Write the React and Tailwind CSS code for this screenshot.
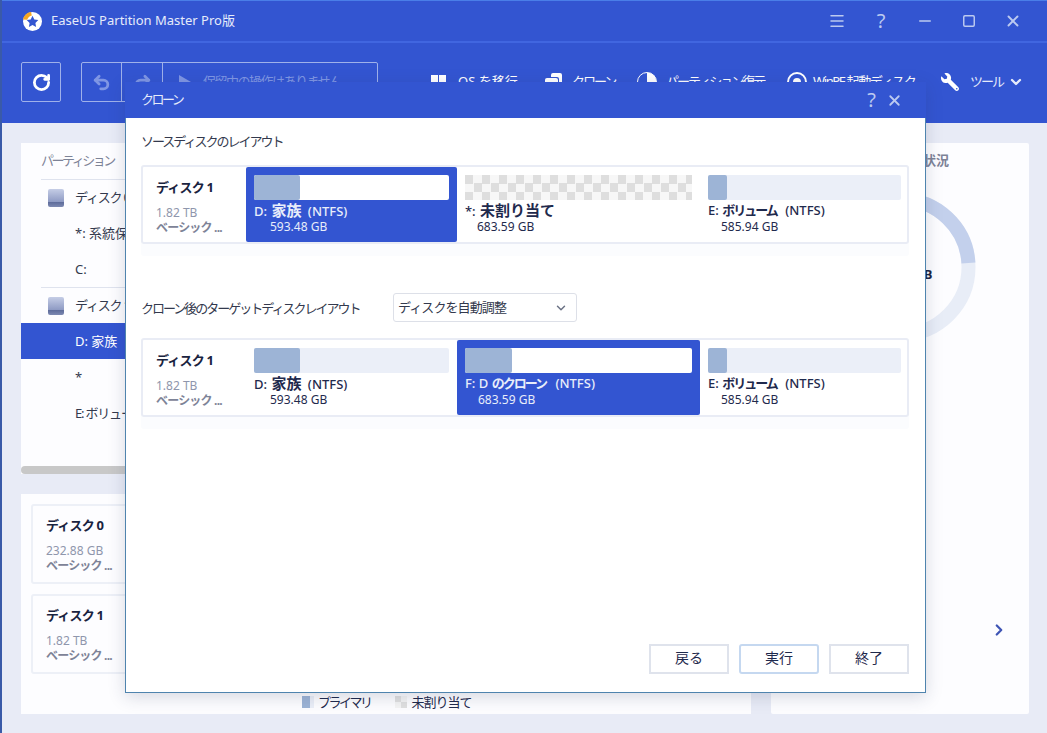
import React from "react";
import { ChevronDown, ChevronRight, Undo2, Redo2, RotateCw, Menu, X, Minus, Square } from "lucide-react";
import { FaWrench } from "react-icons/fa";

const font = "font-['Noto_Sans','Noto_Sans_CJK_JP',sans-serif]";

function Logo() {
  return (
    <svg width="20" height="20" viewBox="0 0 20 20" className="shrink-0">
      <circle cx="10.5" cy="10.5" r="9.5" fill="#fff" />
      <path d="M10.5 4.8l1.8 3.7 4 .6-2.9 2.8.7 4-3.6-1.9-3.6 1.9.7-4-2.9-2.8 4-.6z" fill="#3355d1" />
      <path d="M1 8.5C1.8 4.5 5 1.6 9 1l.8 3.5C7.5 5 6 6.5 5.2 8.8z" fill="#f5a623" />
    </svg>
  );
}

function DiskIcon() {
  return (
    <svg width="16" height="18" viewBox="0 0 16 18">
      <defs>
        <linearGradient id="dg" x1="0" y1="0" x2="0" y2="1">
          <stop offset="0" stopColor="#c5cde6" />
          <stop offset="0.7" stopColor="#8f9bc4" />
          <stop offset="0.72" stopColor="#5c6a99" />
          <stop offset="1" stopColor="#7d89b2" />
        </linearGradient>
      </defs>
      <path d="M2 0h12a2 2 0 0 1 2 2v14a2 2 0 0 1-2 2H2a2 2 0 0 1-2-2V2a2 2 0 0 1 2-2z" fill="url(#dg)" />
    </svg>
  );
}

function CloneIcon() {
  return (
    <svg width="17" height="18" viewBox="0 0 17 18" fill="#fff">
      <path d="M6 2a2 2 0 0 1 2-2h7a2 2 0 0 1 2 2v10a2 2 0 0 1-2 2h-1V6a2 2 0 0 0-2-2H6z" />
      <path d="M0 7a2 2 0 0 1 2-2h9a2 2 0 0 1 2 2v9a2 2 0 0 1-2 2H2a2 2 0 0 1-2-2z" />
    </svg>
  );
}

function TreeRow({ label, disk, selected, line, tight }) {
  return (
    <div className={`relative flex h-9 items-center pt-[2px] text-[13px] ${selected ? "bg-[#3355d1] text-white" : "text-[#33394d]"}`}>
      {line && <div className="absolute left-5 right-0 top-0 h-px bg-[#dfe3ee]" />}
      <div className="flex w-[54px] justify-end pr-[11px]">{disk && <DiskIcon />}</div>
      <span className={`whitespace-nowrap ${tight ? "tracking-[-1.2px]" : ""}`}>{label}</span>
    </div>
  );
}

function ToolItem({ icon, label, className }) {
  return (
    <div className={`flex shrink-0 items-center text-[13px] text-white whitespace-nowrap ${className}`}>
      {icon}
      <span>{label}</span>
    </div>
  );
}

function DiskInfo({ name, size, className }) {
  return (
    <div className={className}>
      <div className="whitespace-nowrap text-[13px] font-bold leading-[18px] tracking-[-0.8px] text-[#1a2340]">{name}</div>
      <div className="mt-[9px] text-xs leading-[15px] text-[#8f96ac]">{size}</div>
      <div className="whitespace-nowrap text-xs font-bold leading-[15px] tracking-[-0.8px] text-[#7d8397]">ベーシック ...</div>
    </div>
  );
}

function Kanji({ children }) {
  return <span className="mx-px text-[15px] font-bold">{children}</span>;
}

function Kana({ children }) {
  return <span className="font-bold tracking-[-2px]">{children}</span>;
}

function Ntfs({ className }) {
  return <span className={className}>(NTFS)</span>;
}

function Segment({ widthClass, selected, fillClass, free, name, size, sizeClass }) {
  return (
    <div className={`${widthClass} h-[75px] shrink-0 rounded-[2px] px-2 pt-2 ${selected ? "bg-[#3355d1]" : ""}`}>
      {free ? (
        <div className="h-[25px] bg-[length:17px_17px] bg-[conic-gradient(#f7f7f7_25%,#dedede_0_50%,#f7f7f7_0_75%,#dedede_0)]" />
      ) : (
        <div className={`h-[25px] rounded-[2px] ${selected ? "bg-white" : "bg-[#ebeff8]"}`}>
          <div className={`h-full rounded-[2px] bg-[#9db4d6] ${fillClass}`} />
        </div>
      )}
      <div className={`mt-[2px] h-[17px] whitespace-nowrap text-[13px] font-medium leading-[17px] ${selected ? "text-[#e8edfa]" : "text-[#1f2a4d]"}`}>{name}</div>
      <div className={`whitespace-nowrap text-xs leading-[15px] ${sizeClass} ${selected ? "text-[#e8edfa]" : "text-[#1f2a4d]"}`}>{size}</div>
    </div>
  );
}

function DiskBox({ children }) {
  return (
    <div className="flex h-[79px] w-[768px] rounded-[3px] border-2 border-[#e9ecf5] pr-2 shadow-[0_12px_0_#fbfcfe]">
      <DiskInfo name="ディスク 1" size="1.82 TB" className="w-[103px] shrink-0 pl-[13px] pt-[11px]" />
      {children}
    </div>
  );
}

function DialogButton({ children, primary }) {
  return (
    <button className={`h-[30px] w-20 border-2 pb-[2px] text-sm text-[#1f2a4d] ${primary ? "rounded-[3px] border-[#c5d8f0]" : "border-[#dfe3ec]"}`}>
      {children}
    </button>
  );
}

function WinIcon({ children }) {
  return <div className="flex w-11 items-center justify-center">{children}</div>;
}

export default function App() {
  return (
    <div className={`relative h-[733px] w-[1047px] overflow-hidden border-l-2 border-[#3a5aa8] bg-[#e8ebf6] ${font}`}>
      <div className="h-px bg-[#4a7ee8]" />
      {/* title bar */}
      <div className="flex h-10 items-center bg-[#3355d1] pl-5 pr-3">
        <Logo />
        <span className="ml-[9px] text-[13px] text-[#e6ebfa]">EaseUS Partition Master Pro版</span>
        <div className="ml-auto flex items-center text-[#bccaf0]">
          <WinIcon><Menu size={18} strokeWidth={2} /></WinIcon>
          <WinIcon><span className="text-xl leading-none">?</span></WinIcon>
          <WinIcon><Minus size={18} strokeWidth={2} /></WinIcon>
          <WinIcon><Square size={14} strokeWidth={2.5} /></WinIcon>
          <WinIcon><X size={18} strokeWidth={2.5} /></WinIcon>
        </div>
      </div>
      {/* toolbar */}
      <div className="flex h-[82px] items-center border-t-2 border-[#4166e0] bg-[#3355d1] pb-[2px] pl-[19px]">
        <div className="flex h-10 w-10 shrink-0 items-center justify-center rounded-[2px] border border-[#9fb1ea]">
          <RotateCw size={19} strokeWidth={3.5} className="text-white" />
        </div>
        <div className="ml-5 flex h-10 w-[297px] shrink-0 rounded-[2px] border border-[#9fb1ea] text-[#7f96e4]">
          <div className="flex w-10 items-center justify-center border-r border-[#9fb1ea]"><Undo2 size={19} strokeWidth={3.5} /></div>
          <div className="flex w-[41px] items-center justify-center border-r border-[#9fb1ea]"><Redo2 size={19} strokeWidth={3.5} /></div>
          <div className="flex items-center gap-3 pl-4 text-[13px]">
            <span className="h-0 w-0 border-y-[7px] border-l-[12px] border-y-transparent border-l-[#7f96e4]" />
            <span className="whitespace-nowrap tracking-[-1.5px]">保留中の操作はありません</span>
          </div>
        </div>
        <ToolItem
          className="ml-[53px] w-[114px] gap-3"
          icon={<div className="grid grid-cols-2 gap-[1px]"><i className="h-[7px] w-[7px] bg-white" /><i className="h-[7px] w-[7px] bg-white" /><i className="h-[7px] w-[7px] bg-white" /><i className="h-[7px] w-[7px] bg-white" /></div>}
          label="OS を移行"
        />
        <ToolItem
          className="w-[92px] gap-[10px] tracking-[-2px]"
          icon={<CloneIcon />}
          label="クローン"
        />
        <ToolItem
          className="w-[150px] gap-[9px] tracking-[-2px]"
          icon={<div className="h-5 w-5 rounded-full border border-white bg-[conic-gradient(#fff_0_50%,transparent_0)]" />}
          label="パーティション復元"
        />
        <ToolItem
          className="w-[154px] gap-[6px] tracking-[-1.4px]"
          icon={<div className="flex h-5 w-5 items-center justify-center rounded-full border-2 border-white"><i className="h-2 w-2 rounded-full bg-white" /></div>}
          label="WinPE 起動ディスク"
        />
        <div className="flex shrink-0 items-center text-[13px] text-[#e6ebfa]">
          <FaWrench size={18} className="-scale-x-100 text-white" />
          <span className="ml-[11px] tracking-[-2px]">ツール</span>
          <ChevronDown size={16} strokeWidth={3.5} className="ml-[5px]" />
        </div>
      </div>
      {/* body */}
      <div className="flex gap-5 pl-[19px] pt-5">
        <div className="w-[730px] shrink-0">
          <div className="h-[331px] bg-[#fdfdff]">
            <div className="flex h-9 items-center pl-5 text-[13px] tracking-[-2.5px] text-[#7d8397]">パーティション</div>
            <TreeRow line disk tight label="ディスク 0" />
            <TreeRow label="*: 系統保留済み" />
            <TreeRow label="C:" />
            <TreeRow line disk tight label="ディスク 1" />
            <TreeRow selected label="D: 家族" />
            <TreeRow label="*" />
            <TreeRow tight label="E: ボリューム" />
            <div className="mt-[35px] h-2 rounded-full bg-[#c8c8c8]" />
          </div>
          <div className="mt-5 h-[220px] bg-[#fdfdff] px-[10px] pt-[10px]">
            <div className="flex h-20 rounded-[3px] border-2 border-[#edf0f7]">
              <DiskInfo name="ディスク 0" size="232.88 GB" className="pl-[13px] pt-[10px]" />
            </div>
            <div className="mt-[10px] flex h-20 rounded-[3px] border-2 border-[#edf0f7]">
              <DiskInfo name="ディスク 1" size="1.82 TB" className="pl-[13px] pt-[10px]" />
            </div>
            <div className="mt-5 flex items-center pl-[271px] text-[13px] leading-[16px] text-[#1f2a4d]">
              <i className="h-3 w-3 bg-[linear-gradient(90deg,#9db4d6_0_8px,#ebeff8_0)]" />
              <span className="ml-1 tracking-[-2.5px]">プライマリ</span>
              <i className="ml-[24px] h-3 w-3 bg-[conic-gradient(#f4f4f4_25%,#e0e0e0_0_50%,#f4f4f4_0_75%,#e0e0e0_0)]" />
              <span className="ml-[5px] tracking-[-1px]">未割り当て</span>
            </div>
          </div>
        </div>
        <div className="relative h-[571px] w-[258px] rounded-[2px] bg-[#fdfdff]">
          <div className="pl-[62px] pt-[8px] text-[13px] font-bold text-[#7d8397]">ディスクの使用状況</div>
          <svg width="160" height="160" viewBox="0 0 160 160" className="absolute left-[50px] top-[44px]">
            <circle cx="80" cy="80" r="67.5" fill="none" stroke="#e8edf7" strokeWidth="14" />
            <path d="M80 12.5A67.5 67.5 0 0 1 147.4 76" fill="none" stroke="#c3d0ec" strokeWidth="14" />
          </svg>
          <div className="absolute left-[116px] top-[122px] text-[13px] font-bold text-[#1a2340]">1.82 TB</div>
          <ChevronRight size={18} strokeWidth={3} className="absolute left-[219px] top-[478px] text-[#3f55b5]" />
        </div>
      </div>
      {/* dialog */}
      <div className="absolute left-[123px] top-[82px] flex h-[611px] w-[801px] flex-col border border-t-0 border-[#4f84ae] bg-white shadow-[0_4px_16px_rgba(40,50,90,0.18)]">
        <div className="-mx-px flex h-9 shrink-0 items-center bg-[#3355d1] pl-[16px] pr-[23px] text-[13px] text-[#e6ebfa]">
          <span className="tracking-[-2.5px]">クローン</span>
          <span className="ml-auto text-xl leading-none text-[#bccaf0]">?</span>
          <X size={17} strokeWidth={2.5} className="ml-[10px] text-[#bccaf0]" />
        </div>
        <div className="flex flex-1 flex-col px-[15px] text-[#33394d]">
          <div className="mt-[13px] whitespace-nowrap text-[13px] leading-5 tracking-[-2px]">ソースディスクのレイアウト</div>
          <div className="mt-[14px]">
            <DiskBox>
              <Segment widthClass="w-[211px]" selected fillClass="w-[46px]" sizeClass="pl-4" name={<>D: <Kanji>家族</Kanji> <Ntfs className="ml-[2px]" /></>} size="593.48 GB" />
              <Segment widthClass="w-[243px]" free sizeClass="pl-[12px]" name={<>*: <Kanji>未割り当て</Kanji></>} size="683.59 GB" />
              <Segment widthClass="w-[209px]" fillClass="w-[19px]" sizeClass="pl-[13px]" name={<>E: <Kana>ボリューム</Kana> <Ntfs className="ml-[5px]" /></>} size="585.94 GB" />
            </DiskBox>
          </div>
          <div className="mt-[49px] flex items-center">
            <span className="w-[252px] shrink-0 whitespace-nowrap text-[13px] leading-5 tracking-[-2px]">クローン後のターゲットディスクレイアウト</span>
            <div className="flex h-[29px] w-[184px] items-center justify-between rounded-[3px] border border-[#dde0e8] pl-1 pr-2 text-[13px]">
              <span className="tracking-[-0.9px]">ディスクを自動調整</span>
              <ChevronDown size={14} strokeWidth={2.5} className="text-[#6b7285]" />
            </div>
          </div>
          <div className="mt-[16px]">
            <DiskBox>
              <Segment widthClass="w-[211px]" fillClass="w-[46px]" sizeClass="pl-4" name={<>D: <Kanji>家族</Kanji> <Ntfs className="ml-[2px]" /></>} size="593.48 GB" />
              <Segment widthClass="w-[243px]" selected fillClass="w-[47px]" sizeClass="pl-[13px]" name={<>F: D <Kana>のクローン</Kana> <Ntfs className="ml-[6px]" /></>} size="683.59 GB" />
              <Segment widthClass="w-[209px]" fillClass="w-[19px]" sizeClass="pl-[13px]" name={<>E: <Kana>ボリューム</Kana> <Ntfs className="ml-[5px]" /></>} size="585.94 GB" />
            </DiskBox>
          </div>
          <div className="mb-[18px] mt-auto flex justify-end gap-[10px] pr-[1px]">
            <DialogButton>戻る</DialogButton>
            <DialogButton primary>実行</DialogButton>
            <DialogButton>終了</DialogButton>
          </div>
        </div>
      </div>
    </div>
  );
}
